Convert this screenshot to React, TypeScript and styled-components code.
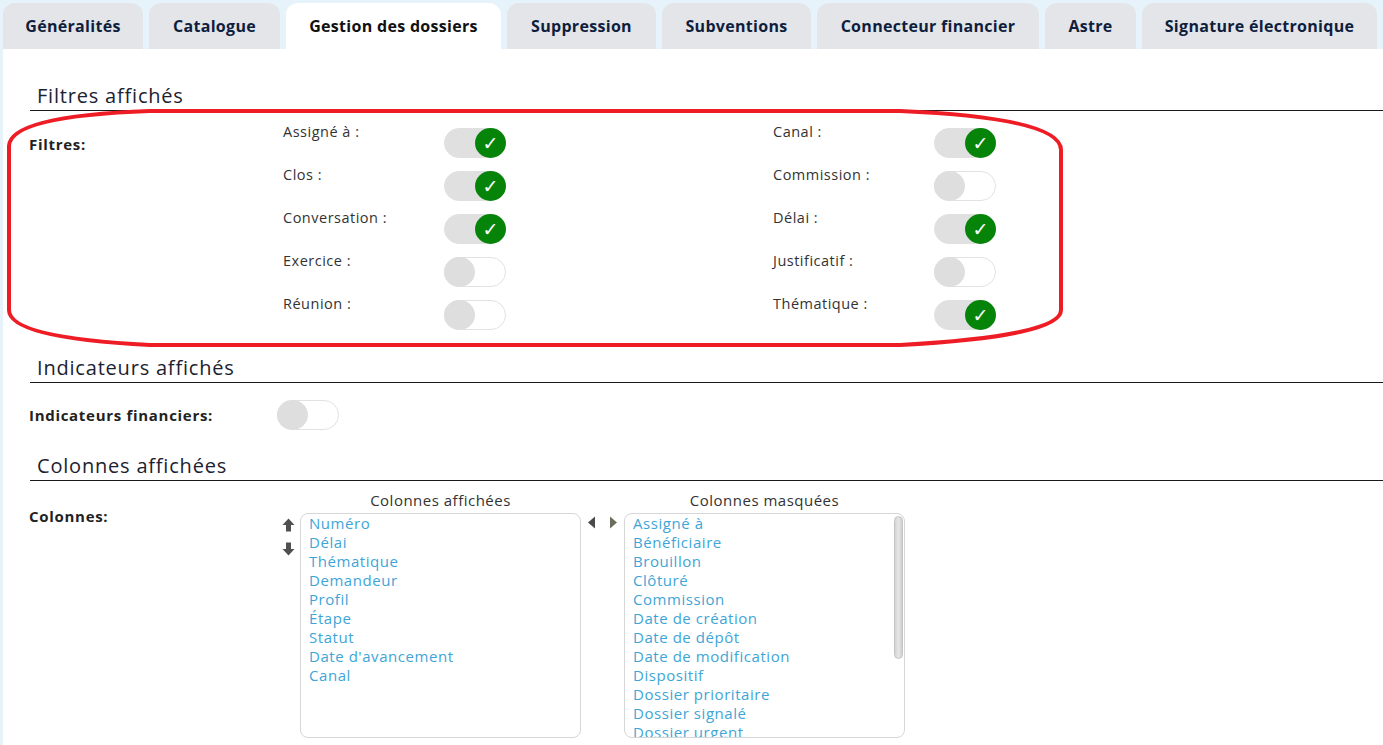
import * as React from 'react';
import styled, { createGlobalStyle } from 'styled-components';

const GlobalStyle = createGlobalStyle`
  html, body {
    margin: 0;
    padding: 0;
    background: #e6f3fa;
  }
  body {
    font-family: 'Open Sans', 'Liberation Sans', sans-serif;
    color: #222;
  }
`;

const tabs = [
  { label: 'Généralités', width: 140 },
  { label: 'Catalogue', width: 131 },
  { label: 'Gestion des dossiers', width: 215, active: true },
  { label: 'Suppression', width: 149 },
  { label: 'Subventions', width: 149 },
  { label: 'Connecteur financier', width: 222 },
  { label: 'Astre', width: 91 },
  { label: 'Signature électronique', width: 235 },
];

const filters: [string, boolean][] = [
  ['Assigné à :', true],
  ['Canal :', true],
  ['Clos :', true],
  ['Commission :', false],
  ['Conversation :', true],
  ['Délai :', true],
  ['Exercice :', false],
  ['Justificatif :', false],
  ['Réunion :', false],
  ['Thématique :', true],
];

const shownColumns = [
  'Numéro', 'Délai', 'Thématique', 'Demandeur', 'Profil', 'Étape', 'Statut',
  "Date d'avancement", 'Canal',
];

const hiddenColumns = [
  'Assigné à', 'Bénéficiaire', 'Brouillon', 'Clôturé', 'Commission',
  'Date de création', 'Date de dépôt', 'Date de modification', 'Dispositif',
  'Dossier prioritaire', 'Dossier signalé', 'Dossier urgent', 'Exercice',
  'Justificatif', 'Montant demandé', 'Montant voté', 'Référence', 'Réunion',
];

function Toggle({ on }: { on: boolean }) {
  return (
    <Track $on={on}>
      <Knob $on={on}>{on ? '✓' : ''}</Knob>
    </Track>
  );
}

function Annotation() {
  return (
    <Overlay width='1383' height='745' viewBox='0 0 1383 745'>
      <path
        d='M9 146 Q10 116 150 111 L900 111 Q1061 118 1061 150 L1061 310 Q1061 336 900 345 L150 345 Q9 338 9 310 Z'
        fill='none'
        stroke='#ee1d25'
        strokeWidth='4'
      />
    </Overlay>
  );
}

export default function App() {
  return (
    <Page>
      <GlobalStyle />
      <TabBar>
        {tabs.map(t => (
          <Tab key={t.label} $width={t.width} $active={!!t.active}>{t.label}</Tab>
        ))}
      </TabBar>
      <Panel>
        <SectionTitle>Filtres affichés</SectionTitle>
        <FieldRow $top={12}>
          <FieldLabel $pad={12}>Filtres:</FieldLabel>
          <FilterGrid>
            {filters.map(([label, on]) => (
              <React.Fragment key={label}>
                <FilterLabel>{label}</FilterLabel>
                <FilterToggle><Toggle on={on} /></FilterToggle>
              </React.Fragment>
            ))}
          </FilterGrid>
        </FieldRow>

        <SectionTitle $top={17}>Indicateurs affichés</SectionTitle>
        <FieldRow $top={17} $center>
          <FieldLabel>Indicateurs financiers:</FieldLabel>
          <div><Toggle on={false} /></div>
        </FieldRow>

        <SectionTitle $top={23}>Colonnes affichées</SectionTitle>
        <FieldRow $top={10}>
          <FieldLabel $pad={16}>Colonnes:</FieldLabel>
          <DualList>
            <SideButtons>
              <IconBtn>
                <svg width='13' height='14' viewBox='0 0 13 14'>
                  <path d='M6.5 0.5 L12.5 7 H9 V13.5 H4 V7 H0.5 Z' fill='#505050' />
                </svg>
              </IconBtn>
              <IconBtn>
                <svg width='13' height='14' viewBox='0 0 13 14'>
                  <path d='M6.5 13.5 L12.5 7 H9 V0.5 H4 V7 H0.5 Z' fill='#505050' />
                </svg>
              </IconBtn>
            </SideButtons>
            <ListColumn>
              <ListTitle>Colonnes affichées</ListTitle>
              <ListBox>
                {shownColumns.map(c => <ListItem key={c}>{c}</ListItem>)}
              </ListBox>
            </ListColumn>
            <MoveButtons>
              <svg width='9' height='13' viewBox='0 0 9 13'>
                <path d='M8 0.5 V12.5 L1 6.5 Z' fill='#4a4a4a' />
              </svg>
              <svg width='9' height='13' viewBox='0 0 9 13'>
                <path d='M1 0.5 V12.5 L8 6.5 Z' fill='#6b6b5e' />
              </svg>
            </MoveButtons>
            <ListColumn>
              <ListTitle>Colonnes masquées</ListTitle>
              <ListBox>
                {hiddenColumns.map(c => <ListItem key={c}>{c}</ListItem>)}
                <ScrollThumb />
              </ListBox>
            </ListColumn>
          </DualList>
        </FieldRow>
      </Panel>
      <Annotation />
    </Page>
  );
}

const Page = styled.div`
  position: relative;
  width: 1383px;
  height: 745px;
  overflow: hidden;
  padding-top: 3px;
  box-sizing: border-box;
`;

const TabBar = styled.nav`
  display: flex;
  gap: 6px;
  padding-left: 3px;
  height: 46px;
`;

const Tab = styled.div<{ $width: number; $active: boolean }>`
  width: ${p => p.$width}px;
  display: flex;
  align-items: center;
  justify-content: center;
  border-radius: 12px 12px 0 0;
  background: ${p => (p.$active ? '#ffffff' : '#e4e5e9')};
  color: ${p => (p.$active ? '#111' : '#0f1e3d')};
  font: 700 16px/18px 'Open Sans', sans-serif;
  letter-spacing: 0.3px;
  white-space: nowrap;
`;

const Panel = styled.main`
  background: #fff;
  margin-left: 3px;
  padding-top: 34px;
  height: 696px;
  box-sizing: border-box;
`;

const SectionTitle = styled.h2<{ $top?: number }>`
  margin: ${p => p.$top || 0}px 0 0 27px;
  padding: 1px 0 2px 7px;
  font: 400 20px/24px 'Open Sans', sans-serif;
  letter-spacing: 0.8px;
  color: #1c2230;
  border-bottom: 1px solid #1a1a1a;
`;

const FieldRow = styled.section<{ $top: number; $center?: boolean }>`
  display: grid;
  grid-template-columns: 248px 1fr;
  align-items: ${p => (p.$center ? 'center' : 'start')};
  margin-top: ${p => p.$top}px;
  padding-left: 26px;
`;

const FieldLabel = styled.div<{ $pad?: number }>`
  padding-top: ${p => p.$pad || 0}px;
  font: 700 15px/18px 'Open Sans', sans-serif;
  letter-spacing: 0.7px;
  color: #222;
`;

const FilterGrid = styled.div`
  display: grid;
  grid-template-columns: 161px 329px 161px 62px;
  grid-auto-rows: 43px;
  padding-left: 6px;
`;

const FilterLabel = styled.div`
  font: 400 14.5px/18px 'Open Sans', sans-serif;
  letter-spacing: 0.5px;
  color: #333;
`;

const FilterToggle = styled.div`
  padding-top: 5px;
`;

const Track = styled.div<{ $on: boolean }>`
  position: relative;
  width: 62px;
  height: 30px;
  box-sizing: border-box;
  border-radius: 15px;
  border: 1px solid ${p => (p.$on ? '#e0e0e0' : '#e2e2e2')};
  background: ${p => (p.$on ? '#e0e0e0' : '#ffffff')};
`;

const Knob = styled.span<{ $on: boolean }>`
  position: absolute;
  top: -1px;
  left: ${p => (p.$on ? '30px' : '-1px')};
  width: 31px;
  height: 30px;
  border-radius: 50%;
  background: ${p => (p.$on ? '#06840a' : '#dedede')};
  color: #fff;
  display: flex;
  align-items: center;
  justify-content: center;
  font: 400 19px/1 'DejaVu Sans', sans-serif;
`;

const DualList = styled.div`
  display: flex;
  align-items: flex-start;
`;

const SideButtons = styled.div`
  width: 23px;
  padding-top: 24px;
  display: flex;
  flex-direction: column;
  align-items: center;
  gap: 10px;
`;

const IconBtn = styled.span`
  display: block;
  height: 14px;
  margin-left: -1px;
`;

const ListColumn = styled.div`
  width: 281px;
  display: flex;
  flex-direction: column;
`;

const ListTitle = styled.div`
  text-align: center;
  font: 400 15px/18px 'Open Sans', sans-serif;
  letter-spacing: 0.5px;
  color: #333;
  margin-bottom: 4px;
`;

const ListBox = styled.div`
  position: relative;
  height: 225px;
  box-sizing: border-box;
  border: 1px solid #d6d6d6;
  border-radius: 8px;
  padding: 0 8px;
  overflow: hidden;
`;

const ScrollThumb = styled.span`
  position: absolute;
  top: 2px;
  right: 1px;
  width: 9px;
  height: 143px;
  border-radius: 5px;
  background: linear-gradient(90deg, #d4d4d4, #e6e6e6 50%, #cfcfcf);
  border: 1px solid #c4c4c4;
  box-sizing: border-box;
`;

const ListItem = styled.div`
  font: 400 15px/19px 'Open Sans', sans-serif;
  letter-spacing: 0.55px;
  color: #3ea5d8;
  white-space: nowrap;
`;

const MoveButtons = styled.div`
  width: 43px;
  padding-top: 25px;
  display: flex;
  justify-content: center;
  gap: 13px;
`;

const Overlay = styled.svg`
  position: absolute;
  top: 0;
  left: 0;
  pointer-events: none;
`;
